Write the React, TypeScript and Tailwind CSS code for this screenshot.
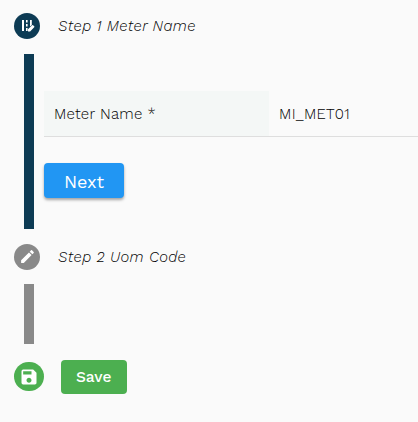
import type { ReactNode } from "react";
import { MdEdit, MdSave } from "react-icons/md";

function EditRoadIcon() {
  return (
    <svg viewBox="0 0 16 16" className="size-4" fill="currentColor">
      <path d="M3 2h2v11H3zM7 2h1.6v2.4H7zM7 6h1.6v2.5H7zM7 10h1.6v3H7zM11 2h1.8v5L11 8.6z" />
      <path d="M9 11.2l4.1-4q.5-.4 1 0l1.1 1.1q.5.5 0 1l-4.1 4.2H9z" />
    </svg>
  );
}

function StepHeader({ icon, color, children }: { icon: ReactNode; color: string; children: ReactNode }) {
  return (
    <div className="flex h-[26px] items-center">
      <div className={`flex size-[26px] shrink-0 items-center justify-center rounded-full text-white ${color}`}>
        {icon}
      </div>
      <span className="ml-[18px] text-[15px] font-[360] tracking-[0.36px] whitespace-nowrap text-black italic">
        {children}
      </span>
    </div>
  );
}

export default function App() {
  return (
    <main className="h-[422px] w-[418px] overflow-hidden bg-[#fafafa] pt-[13px] pl-[14px] font-['Work_Sans','Inter',sans-serif] text-[15px] leading-5 text-black">
      <StepHeader color="bg-[#0d3b54]" icon={<EditRoadIcon />}>Step 1 Meter Name</StepHeader>

      <section className="mt-[14.5px] ml-[10px] flex h-[175px]">
        <div className="w-[10px] shrink-0 bg-[#0d3b54]" />
        <div className="ml-[10px] flex-1 pt-[37px]">
          <div className="flex h-[46px] border-b border-[#dedede]">
            <label className="flex w-[225px] items-center bg-[#f4f7f6] pt-px pl-[10px] font-[360] tracking-[0.26px]">Meter Name *</label>
            <span className="flex items-center pt-px pl-[10px] text-[15px] font-[360] tracking-[0.3px]">MI_MET01</span>
          </div>
          <button className="mt-[26.5px] flex h-[35px] w-[80px] items-center justify-center rounded-[4px] bg-[#2196f3] pt-0.5 text-[18px] tracking-[-0.1px] text-white shadow-[0_2px_3px_rgba(0,0,0,0.35)]">
            Next
          </button>
        </div>
      </section>

      <div className="mt-[15px]">
        <StepHeader color="bg-[#898989]" icon={<MdEdit size={17} />}>Step 2 Uom Code</StepHeader>
      </div>
      <div className="mt-[14.5px] ml-[10px] h-[60px] w-[10px] bg-[#898989]" />

      <div className="mt-[15.5px] flex items-center">
        <div className="flex size-[29.5px] items-center justify-center rounded-full bg-[#4caf50] text-white">
          <MdSave size={20} />
        </div>
        <button className="ml-[17px] flex h-[34px] w-[66.5px] items-center justify-center rounded-[4px] bg-[#4caf50] text-[15.5px] font-medium text-white">
          Save
        </button>
      </div>
    </main>
  );
}
